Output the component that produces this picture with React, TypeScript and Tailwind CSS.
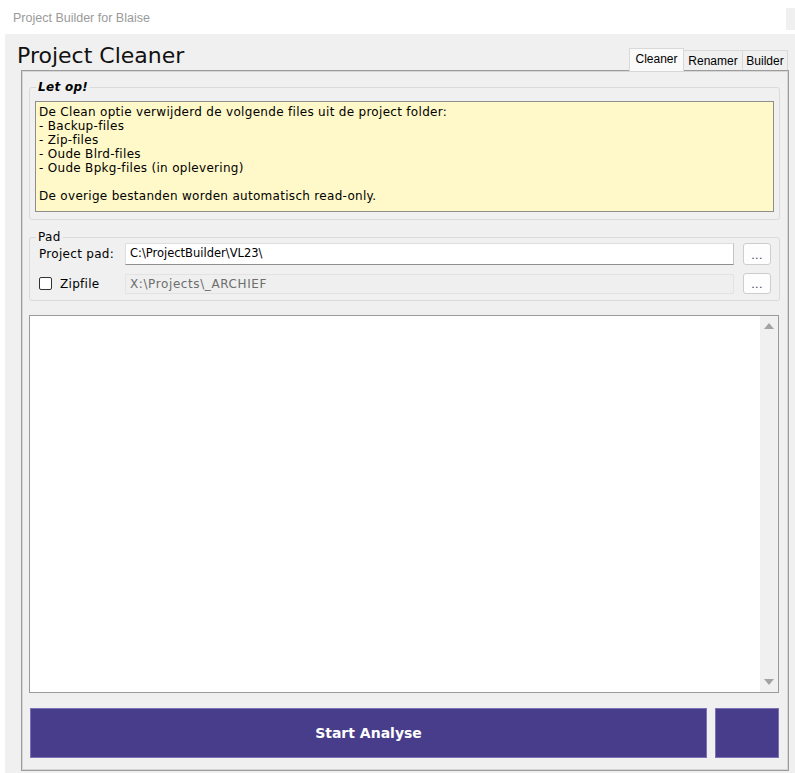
import React from 'react';

const verdana = { fontFamily: '"DejaVu Sans", Verdana, sans-serif' };
const segoe = { fontFamily: '"Liberation Sans", Arial, sans-serif' };

const infoLines = [
  'De Clean optie verwijderd de volgende files uit de project folder:',
  '- Backup-files',
  '- Zip-files',
  '- Oude Blrd-files',
  '- Oude Bpkg-files (in oplevering)',
  '\u00a0',
  'De overige bestanden worden automatisch read-only.',
];

function BrowseButton() {
  return (
    <button
      type="button"
      className="ml-[9px] flex h-full w-[28px] items-end justify-center rounded-[3px] border border-[#cdcdcd] bg-[#fdfdfd] pb-[3px] text-[11px] leading-[11px] text-[#3a3a5a]"
    >
      ...
    </button>
  );
}

export default function App() {
  return (
    <div className="flex h-[773px] w-[795px] flex-col bg-white text-black" style={verdana}>
      {/* window title bar */}
      <div className="flex h-[34px] shrink-0 justify-between">
        <span className="ml-[13px] mt-[10px] text-[12.5px] leading-[16px] text-[#9a9a9a]" style={segoe}>
          Project Builder for Blaise
        </span>
        <div className="mt-[8px] h-[22px] w-[9px] bg-[#f0f0f0]" />
      </div>

      <div className="ml-[5px] flex flex-1 flex-col bg-[#f0f0f0]">
        {/* header with tabs */}
        <div className="flex h-[36px] justify-between">
          <h1 className="ml-[12px] pt-[9px] text-[22px] leading-[26px] text-[#111]">Project Cleaner</h1>
          <div className="mr-[7px] flex items-end text-[12px]" style={segoe}>
            <div className="relative top-[1px] flex h-[23px] w-[55px] justify-center border border-b-0 border-[#d9d9d9] bg-[#fafafa] pt-[2px] leading-[16px]">
              Cleaner
            </div>
            <div className="flex h-[20px] w-[59px] justify-center border border-b-0 border-l-0 border-[#d9d9d9] bg-[#f0f0f0] pt-[2px] leading-[16px]">
              Renamer
            </div>
            <div className="flex h-[20px] w-[45px] justify-center border border-b-0 border-l-0 border-[#d9d9d9] bg-[#f0f0f0] pt-[2px] leading-[16px]">
              Builder
            </div>
          </div>
        </div>

        {/* tab page */}
        <div className="ml-[16px] mr-[6px] flex h-[701px] flex-col border border-[#9c9c9c] pl-[7px] pr-[8px] pt-[9px] shadow-[inset_1px_1px_0_#d6d6d6,inset_-1px_-1px_0_#d6d6d6]">
          <fieldset className="rounded-[3px] border border-[#dadada] px-[5px] pb-[7px]">
            <legend className="ml-[1px] px-[2px] text-[12px] font-bold italic leading-[14px] tracking-[0.3px]">Let op!</legend>
            <div className="mt-[7px] h-[111px] border border-[#8e8e8e] bg-[#fff8c9] pl-[3px] pt-[3px] text-[12px] leading-[14px] tracking-[0.3px]">
              {infoLines.map((line, i) => (
                <div key={i}>{line}</div>
              ))}
            </div>
          </fieldset>

          <fieldset className="mt-[10px] rounded-[3px] border border-[#dadada] pb-[6px] pl-[5px] pr-[8px] text-[12px] tracking-[0.3px]">
            <legend className="ml-[1px] px-[2px] leading-[14px]">Pad</legend>
            <div className="-mt-[1px] flex h-[22px] items-center">
              <span className="w-[90px] pl-[4px]">Project pad:</span>
              <div className="flex h-full flex-1 items-center border border-[#dedede] border-b-[#8f8f8f] border-r-[#c4c4c4] bg-white pl-[4px] text-[11.5px] tracking-normal">
                C:\ProjectBuilder\VL23\
              </div>
              <BrowseButton />
            </div>
            <div className="mt-[8px] flex h-[21px] items-center">
              <div className="flex w-[90px] items-center pl-[4px]">
                <span className="h-[13px] w-[13px] rounded-[2px] border border-[#333] bg-white" />
                <span className="ml-[8px]">Zipfile</span>
              </div>
              <div className="flex h-[20px] flex-1 items-center border border-[#e3e3e3] bg-[#efefef] pl-[4px] tracking-[0.6px] text-[#6d6d6d]">
                X:\Projects\_ARCHIEF
              </div>
              <BrowseButton />
            </div>
          </fieldset>

          {/* output log */}
          <div className="mt-[14px] flex h-[378px] w-[750px] border border-[#9a9a9a] bg-white">
            <div className="flex-1" />
            <div className="flex w-[18px] flex-col items-center justify-between bg-[#f0f0f0] py-[7px]">
              <svg width="10" height="6" viewBox="0 0 10 6">
                <path d="M5 0 L10 6 L0 6 Z" fill="#a3a3a3" />
              </svg>
              <svg width="10" height="6" viewBox="0 0 10 6">
                <path d="M0 0 L10 0 L5 6 Z" fill="#a3a3a3" />
              </svg>
            </div>
          </div>

          <div className="mt-[15px] flex h-[50px] gap-[8px] px-[1px]">
            <button
              type="button"
              className="flex-1 border border-[#7a72b3] bg-[#483d8b] text-[14px] font-bold text-white"
            >
              Start Analyse
            </button>
            <button type="button" className="w-[64px] border border-[#7a72b3] bg-[#483d8b]" />
          </div>
        </div>
      </div>
    </div>
  );
}
